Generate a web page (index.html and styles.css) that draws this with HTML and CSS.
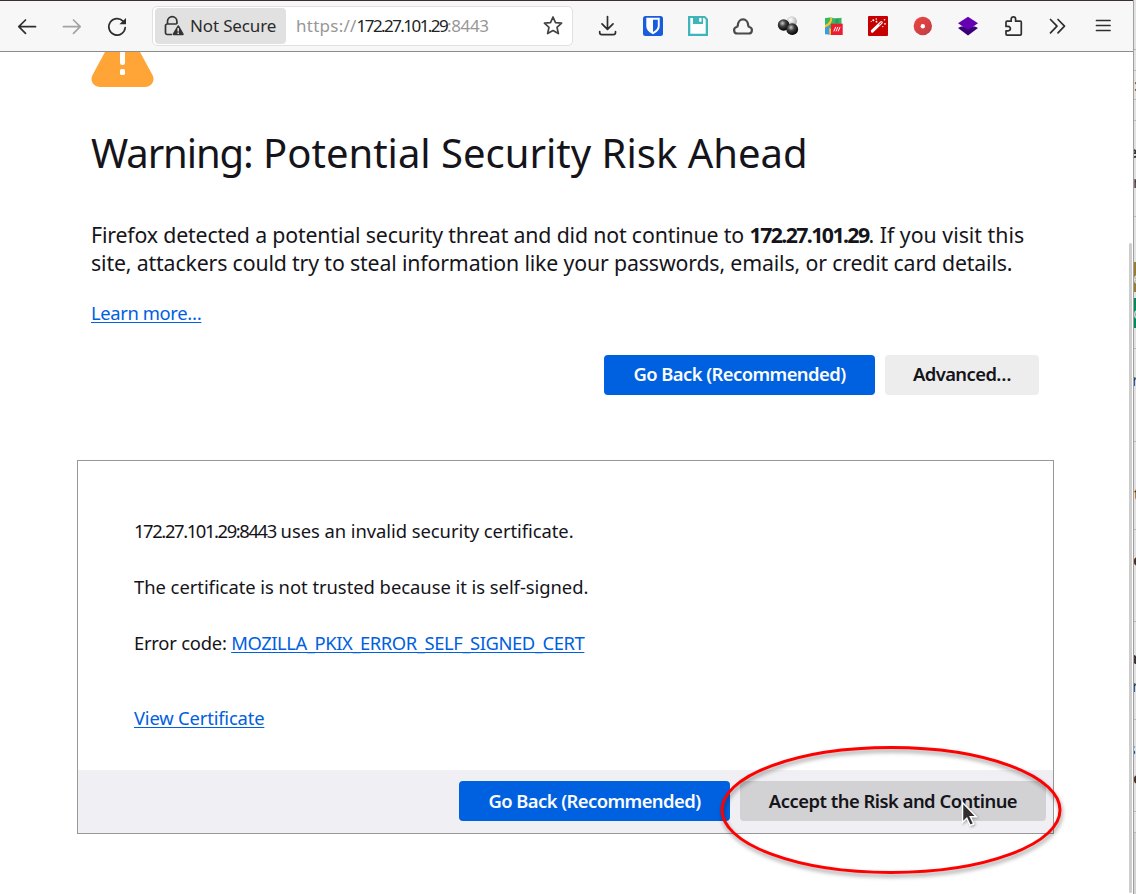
FILE: index.html
```html
<!DOCTYPE html>
<html lang="en">
<head>
<meta charset="utf-8">
<title>Warning: Potential Security Risk Ahead</title>
<link rel="stylesheet" href="styles.css">
</head>
<body>
<div class="screen">
  <div class="window">
    <header class="toolbar">
      <nav class="nav">
        <span class="tool"><svg class="icon" viewBox="0 0 25 25"><path d="M21.5 12.7H5M11.5 6 4.8 12.7l6.700 6.700"/></svg></span>
        <span class="tool dim"><svg class="icon" viewBox="0 0 25 25"><path d="M4.500 12.700H21M14.500 6l6.700 6.700-6.700 6.700"/></svg></span>
        <span class="tool"><svg class="icon" viewBox="0 0 25 25"><path d="M19 7.200A8.200 8.200 0 1 0 21.200 13.500"/><path class="solid" d="M22 4v6.300h-6.600z"/></svg></span>
      </nav>
      <div class="urlbar">
        <div class="identity">
          <svg class="lock" viewBox="0 0 20 22"><path d="M3.500 9V6.300a4.700 4.700 0 0 1 9.400 0V9M8 19.500H3.200A1.700 1.700 0 0 1 1.500 17.800V10.700A1.700 1.700 0 0 1 3.200 9h9.600"/><path class="solid" d="M13.700 10.500a1 1 0 0 1 1.200 0l4.700 8.300a.9.900 0 0 1-.8 1.400H9.500a.9.900 0 0 1-.8-1.400z"/><path class="mark" d="M14.200 13v3.400M14.200 17.600v1.300"/></svg>
          <span class="t-id">Not Secure</span>
        </div>
        <div class="url"><span class="t-proto">https://</span><span class="host">172.27.101.29</span><span class="t-port">:8443</span></div>
        <svg class="star" viewBox="0 0 22 22"><path d="M11 2l2.500 5.600 6.100.6-4.600 4.100 1.400 6.300-5.400-3.100-5.400 3.100L7 12.300 2.400 8.200l6.100-.6z"/></svg>
      </div>
      <div class="tools">
        <span class="tool"><svg class="icon" viewBox="0 0 25 25"><path d="M12.500 2.500V15M7 9.800l5.500 5.500 5.500-5.500M4.700 17.500v1a2.200 2.200 0 0 0 2.200 2.200h11.400a2.200 2.200 0 0 0 2.200-2.200v-1"/></svg></span>
        <span class="tool"><svg class="icon flat" viewBox="0 0 25 25"><rect x="3" y="2" width="20" height="20" rx="2.500" fill="#175ddc"/><path fill="#fff" d="M6.300 3.700h13.400v8.300c0 4-3.300 6.500-6.700 8.200-3.400-1.700-6.700-4.200-6.700-8.200z"/><path fill="#175ddc" d="M13 5.800h4.800v6.200c0 2.700-2.300 4.500-4.800 5.900z"/></svg></span>
        <span class="tool"><svg class="icon flat" viewBox="0 0 25 25"><path fill="#3fb5b9" d="M3 2h17l3 3v17H3z"/><path fill="#fff" d="M5.300 10h15.400v9.800H5.300zM5.300 4H8v6H5.300zM18 4h1.300l1.400 1.500V10H18zM14.200 4h2.300v3.800h-2.300z"/></svg></span>
        <span class="tool"><svg class="icon cloud" viewBox="0 0 25 25"><path d="M7.300 19.500a3.300 3.300 0 0 1-.7-6.500c.7-.2 1.100-.7 1.200-1.500.1-3.500 2.200-6.200 5.200-6.200s5.100 2.700 5.200 6.200c.1.800.5 1.300 1.200 1.500a3.300 3.300 0 0 1-.7 6.500z"/></svg></span>
        <span class="tool"><svg class="icon flat" viewBox="0 0 25 25"><defs><radialGradient id="dark" cx=".4" cy=".35" r=".6"><stop offset="0" stop-color="#ccc"/><stop offset=".45" stop-color="#444"/><stop offset="1" stop-color="#080808"/></radialGradient><radialGradient id="light" cx=".4" cy=".35" r=".65"><stop offset="0" stop-color="#fff"/><stop offset="1" stop-color="#aaa"/></radialGradient></defs><circle cx="16.700" cy="7.400" r="5.200" fill="url(#light)"/><circle cx="8.600" cy="11" r="5.800" fill="url(#dark)"/><circle cx="17.200" cy="15.200" r="5.900" fill="url(#dark)"/></svg></span>
        <span class="tool"><svg class="icon flat" viewBox="0 0 25 25"><path fill="#35b768" d="M5 4l5.500-.6L16 4.500l5.500-.8V20H5z"/><path fill="#2a9d56" d="M15.500 4.500h3v5h-3z"/><path fill="#3b9ce8" d="M5 14l4-2.500 2 9.300-6-.5z"/><path fill="#ffc32b" d="M10.500 3.500h1.800c0 5-2 8-7.300 10V11c3.500-1.500 5.300-4 5.500-7.500zM9 14l2 1v5.500l-1.500.3z"/><path fill="#ee1c2e" d="M11 9.700h11.700V21H11z"/><path stroke="#fff" stroke-width="1" d="M14 17l1.500-3.700M16.200 17l1.500-3.700M18.400 17l1.500-3.700"/></svg></span>
        <span class="tool"><svg class="icon flat" viewBox="0 0 25 25"><rect x="3" y="2" width="20" height="20" rx="1" fill="#c60000"/><path stroke="#fff" stroke-width="3" stroke-linecap="round" d="M7.300 17.200l9-8.700"/><path stroke="#c60000" stroke-width="1" d="M14.500 10.200l1.800-1.700"/><g fill="#fff"><circle cx="8.300" cy="6.300" r="1"/><circle cx="11.300" cy="5" r=".8"/><circle cx="11.500" cy="7.700" r=".9"/><circle cx="19.500" cy="5.800" r=".8"/><circle cx="20" cy="9.800" r=".9"/><circle cx="17.800" cy="12.600" r=".7"/><circle cx="6.200" cy="7.500" r=".6"/></g></svg></span>
        <span class="tool"><svg class="icon flat" viewBox="0 0 25 25"><defs><linearGradient id="rec" x2="1" y2="1"><stop stop-color="#f0453f"/><stop offset="1" stop-color="#bd3d47"/></linearGradient></defs><circle cx="12.800" cy="12" r="9.200" fill="url(#rec)"/><circle cx="12.800" cy="12.200" r="2.200" fill="#fff"/></svg></span>
        <span class="tool"><svg class="icon flat" viewBox="0 0 25 25"><path fill="#3b0078" d="M3 14l3-1.500h14L23 14l-10 7.500z"/><path fill="#6500b3" d="M13 2.700L23 9.200l-10 6.900L3 9.200z"/></svg></span>
        <span class="tool"><svg class="icon" viewBox="0 0 25 25"><path d="M6 12.400V8.200a1 1 0 0 1 1-1h4.200V5a2.200 2.200 0 0 1 4.400 0v2.200h4.700a1 1 0 0 1 1 1v11.900a1 1 0 0 1-1 1H7a1 1 0 0 1-1-1v-3.300h2.200a2.200 2.200 0 0 0 0-4.400z"/></svg></span>
        <span class="tool"><svg class="icon" viewBox="0 0 25 25"><path d="M5.500 5.500l6.500 6.700-6.500 6.700M13 5.500l6.500 6.700L13 18.900"/></svg></span>
        <span class="tool"><svg class="icon" viewBox="0 0 25 25"><path d="M6.500 6.500h13.500M6.500 11.500h13.500M6.500 16.500h13.500"/></svg></span>
      </div>
    </header>

    <main class="page">
      <svg class="warning" viewBox="0 0 63 36"><path fill="#ffa436" d="M14 0h35l12.500 23c3 6-1 12-7.500 12H9C2.500 35-1.500 29 1.500 23z"/><path fill="#fff" d="M29 0h5v10.500a2.500 2.500 0 0 1-5 0z"/><rect x="29" y="17" width="5" height="6" rx="1.500" fill="#fff"/></svg>
      <h1><span class="t-warn">Warning:</span> Potential Security Risk Ahead</h1>
      <p class="intro"><span class="t-i1">Firefox detected a potential security threat and did not continue to</span> <b class="t-ip">172.27.101.29</b><span class="t-i2">. If you visit this</span><br><span class="t-i3">site, attackers could try to steal information like your passwords, emails, or credit card details.</span></p>
      <p class="learn"><a class="t-learn">Learn more…</a></p>
      <div class="actions">
        <button class="btn primary">Go Back (Recommended)</button>
        <button class="btn plain advanced">Advanced…</button>
      </div>
      <section class="panel">
        <div class="details">
          <p><span class="t-addr">172.27.101.29:8443</span> <span class="t-d1">uses an invalid security certificate.</span></p>
          <p><span class="t-d2">The certificate is not trusted because it is self-signed.</span></p>
          <p><span class="t-d3">Error code: </span><a class="t-code">MOZILLA_PKIX_ERROR_SELF_SIGNED_CERT</a></p>
          <p class="view"><a class="t-view">View Certificate</a></p>
        </div>
        <div class="panel-actions">
          <button class="btn primary">Go Back (Recommended)</button>
          <button class="btn accept">Accept the Risk and Continue</button>
        </div>
      </section>
    </main>
    <div class="scrollbar"></div>
  </div>

  <aside class="behind">
    <svg class="edge" viewBox="0 0 3 894">
      <rect width="3" height="894" fill="#e2e2e2"/>
      <path stroke="#b8b8b8" d="M0 49.500h3M0 70.500h3M0 99.500h3M0 120.500h3M0 216.500h3M0 348.500h3M0 441.500h3M0 529.500h3M0 621.500h3M0 719.500h3M0 811.500h3M0 832.500h3"/>
      <rect y="833" width="3" height="61" fill="#d3d3d3"/>
      <rect y="262" width="3" height="30" fill="#987c35"/>
      <rect y="298" width="3" height="30" fill="#078a5b"/>
      <g class="edge-text">
        <text x="1" y="91">:</text><text class="b" x="-5" y="158">e</text><text x="0" y="188">r</text>
        <text x="0" y="284" fill="#ddd">e</text><text x="0" y="319" fill="#ddd">c</text><text x="-1" y="386">r</text>
        <text x="1" y="500">t</text><text class="b" x="0" y="566">e</text><text class="b" x="-5" y="664">a</text>
        <text x="-1" y="692">r</text><text x="-5" y="755">s</text><text class="b" x="0" y="784">o</text>
      </g>
      <path stroke="#a0a0a0" d="M.5 0v894"/>
    </svg>
  </aside>

  <svg class="annotation" viewBox="0 0 356 144"><ellipse cx="178" cy="71" rx="169" ry="62.500"/></svg>
  <svg class="cursor" viewBox="0 0 18 28"><path d="M1.500 1.500v20l4.300-4.200 3.400 7.200 3.600-1.700-3.500-7h6z"/></svg>
</div>
</body>
</html>
```
FILE: styles.css
```css
* { box-sizing: border-box; }
body {
  margin: 0;
  background: #fff;
  color: #15141a;
  font-family: "Noto Sans", "Open Sans", sans-serif;
  font-size: 18.400px;
}
.screen { position: relative; display: flex; width: 1136px; height: 894px; overflow: hidden; }
.window { position: relative; width: 1133px; height: 894px; }
.behind { width: 3px; height: 894px; }
.edge { display: block; width: 3px; height: 894px; overflow: hidden; }
.edge-text { font-size: 16px; fill: #333; }
.edge-text .b { font-weight: 700; }

.toolbar {
  display: flex;
  align-items: center;
  height: 52px;
  padding-left: 4px;
  background: #f7f7f7;
  border-top: 1px solid #3a2f30;
  border-bottom: 1px solid #8c8c8c;
}
.nav, .tools { display: flex; }
.tool { display: flex; justify-content: center; width: 45px; height: 25px; }
.icon { width: 25px; height: 25px; fill: none; stroke: #2e2e2e; stroke-width: 1.700; stroke-linecap: round; stroke-linejoin: round; }
.icon .solid { fill: #2e2e2e; stroke: none; }
.icon.flat { stroke: none; }
.icon.cloud { stroke: #4a4a4a; stroke-width: 2.200; }
.dim .icon { stroke: #a3a3a3; }
.urlbar {
  display: flex;
  align-items: center;
  width: 421px;
  height: 40px;
  margin: 0 12px 0 13px;
  padding: 0 8px 0 2px;
  background: #fff;
  border: 1px solid #e1e1e1;
  border-radius: 5px;
}
.identity { display: flex; align-items: center; width: 131px; height: 36px; padding-left: 9px; gap: 6px; background: #e1e1e1; border-radius: 4px; color: #2b2b2b; font-size: 17px; white-space: nowrap; }
.t-id { padding-bottom: 2px; letter-spacing: -.15px; }
.lock { width: 20px; height: 22px; fill: none; stroke: #333; stroke-width: 1.700; }
.lock .solid { fill: #333; stroke: none; }
.lock .mark { stroke: #e1e1e1; stroke-width: 1.500; }
.url { flex: 1; padding: 0 0 2px 10px; color: #979797; font-size: 17px; white-space: nowrap; }
.t-proto { letter-spacing: .25px; }
.host { color: #222; letter-spacing: -1.570px; }
.t-port { letter-spacing: -.4px; }
.star { width: 22px; height: 22px; fill: none; stroke: #444; stroke-width: 1.700; stroke-linejoin: round; }

.page { padding: 0 79px 0 77px; }
.warning { display: block; width: 63px; height: 36px; margin-left: 14px; }
h1 { margin: 38px 0 0 14px; font-size: 40px; line-height: 54px; font-weight: 400; white-space: nowrap; }
.t-warn { letter-spacing: -1.100px; }
.intro { margin: 41px 0 0 14px; font-size: 21.300px; line-height: 28px; white-space: nowrap; }
.t-i1 { letter-spacing: -.16px; }
.t-ip { letter-spacing: -1.600px; }
.t-i3 { letter-spacing: -.153px; }
.learn { margin: 23px 0 0 14px; line-height: 26px; }
a { color: #0060df; text-decoration: underline; text-decoration-thickness: 1px; text-underline-offset: 2px; text-decoration-skip-ink: none; }
.t-learn { letter-spacing: -.38px; }
.actions { display: flex; justify-content: flex-end; gap: 10px; margin: 29px 15px 0 0; }
.btn {
  width: 271px;
  height: 40px;
  padding: 0;
  border: 0;
  border-radius: 4px;
  color: #15141a;
  font: 600 18.400px/40px "Noto Sans", "Open Sans", sans-serif;
  letter-spacing: -.56px;
  white-space: nowrap;
}
.actions .btn { padding-bottom: 2px; line-height: 38px; }
.primary { background: #0061e0; color: #fbfbfe; }
.plain { background: #ededed; }
.advanced { width: 154px; }
.accept { width: 306px; background: #d2d2d4; letter-spacing: -.5px; }
.panel { width: 977px; height: 374px; margin-top: 65px; border: 1px solid #989898; }
.details { height: 309px; padding: 57px 56px 0; white-space: nowrap; }
.details p { margin: 0 0 30px; line-height: 26px; }
.details .view { margin-top: 49px; }
.t-addr { letter-spacing: -1.400px; }
.t-d1 { letter-spacing: -.05px; }
.t-d2 { letter-spacing: -.035px; }
.t-d3 { letter-spacing: -.23px; }
.t-code { letter-spacing: -.43px; }
.t-view { letter-spacing: -.18px; }
.panel-actions { display: flex; justify-content: flex-end; gap: 10px; height: 63px; padding: 11px 7px 0 0; background: #f0f0f4; }
.scrollbar { position: absolute; right: 1px; top: 243px; width: 3px; height: 650px; border-radius: 2px; background: #cdcdcd; }

.annotation { position: absolute; left: 713px; top: 739px; width: 356px; height: 144px; fill: none; stroke: #ff0000; stroke-width: 3; filter: drop-shadow(1px 3px 2px rgba(0, 0, 0, .4)); }
.cursor { position: absolute; left: 961px; top: 801px; width: 18px; height: 28px; fill: #2f2f2f; stroke: #fff; stroke-width: 1.500; filter: drop-shadow(1px 1px 1px rgba(0, 0, 0, .3)); }
```
